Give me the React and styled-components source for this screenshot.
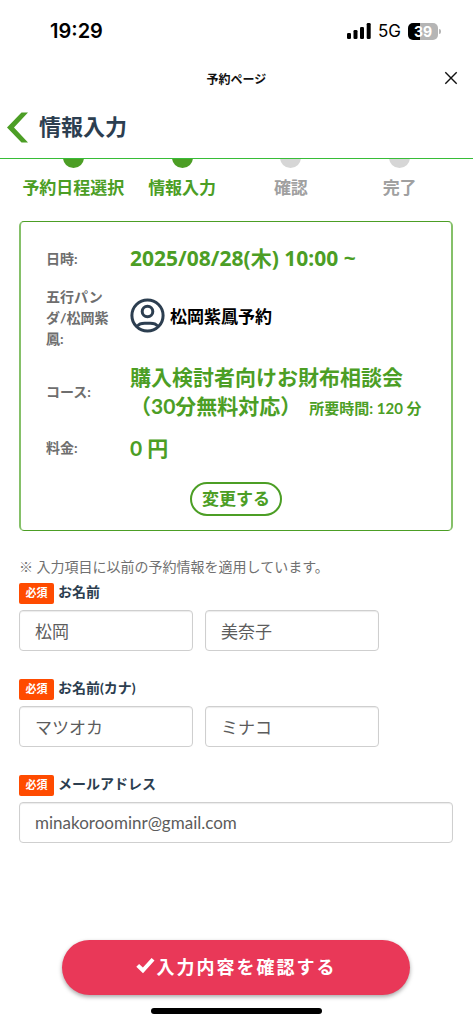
import React from 'react';
import styled, { createGlobalStyle } from 'styled-components';

const green = '#4c9e25';
const navy = '#2c3e50';

const GlobalStyle = createGlobalStyle`
  * { box-sizing: border-box; }
  body { margin: 0; background: #fff; }
  body, button, input {
    font-family: Lato, "Noto Sans CJK JP", sans-serif;
  }
`;

const Page = styled.div`
  min-height: 100vh;
  display: flex;
  flex-direction: column;
  color: ${navy};
`;

const StatusBar = styled.div`
  height: 62px;
  padding: 0 32px 0 50px;
  display: flex;
  align-items: center;
  justify-content: space-between;
  font-family: Inter, sans-serif;
  color: #000;
`;

const Clock = styled.time`
  font-size: 20px;
  font-weight: 600;
`;

const Indicators = styled.div`
  display: flex;
  align-items: center;
  gap: 7px;
  font-size: 17px;
`;

const Battery = styled.div`
  display: flex;
  align-items: center;
  gap: 1px;
`;

const BatteryBody = styled.span`
  width: 30px;
  height: 17px;
  border-radius: 5px;
  background: linear-gradient(to right, #000 40%, #b5b5b5 40%);
  color: #fff;
  font-size: 14px;
  font-weight: 700;
  line-height: 17px;
  text-align: center;
`;

const BatteryCap = styled.span`
  width: 2px;
  height: 5px;
  border-radius: 0 2px 2px 0;
  background: #b5b5b5;
`;

const TitleBar = styled.div`
  height: 32px;
  padding: 0 15px;
  display: grid;
  grid-template-columns: 14px 1fr 14px;
  align-items: center;
  color: #111;
`;

const PageName = styled.span`
  grid-column: 2;
  font-size: 12px;
  font-weight: 700;
  text-align: center;
`;

const IconButton = styled.button`
  border: 0;
  padding: 0;
  background: none;
  display: flex;
  color: inherit;
  cursor: pointer;
`;

const Header = styled.header`
  height: 65px;
  padding: 2px 7px 0;
  display: flex;
  align-items: center;
  gap: 11px;
  border-bottom: 1px solid #37bd37;
`;

const Heading = styled.h1`
  margin: 0;
  font-size: 22px;
  line-height: 32px;
  font-weight: 700;
`;

const Steps = styled.ol`
  list-style: none;
  margin: 0;
  padding: 0 19px;
  display: grid;
  grid-template-columns: repeat(4, 1fr);
`;

const Step = styled.li`
  display: flex;
  flex-direction: column;
  align-items: center;
  gap: 8px;
  font-size: 17px;
  line-height: 24px;
  font-weight: 700;
  white-space: nowrap;
  color: ${(p) => (p.$done ? green : '#a0a0a0')};
`;

const DotWindow = styled.span`
  height: 9px;
  overflow: hidden;
  display: flex;
  align-items: flex-end;
`;

const Dot = styled.span`
  width: 21px;
  height: 21px;
  border-radius: 50%;
  background: ${(p) => (p.$done ? green : '#d6d6d6')};
`;

const Main = styled.main`
  padding: 21px 20px 0 19px;
`;

const Card = styled.section`
  padding: 22px 25px 14px 25px;
  border: 1px solid ${green};
  border-width: 1px 2px;
  border-color: ${green} #85c069;
  border-radius: 5px;
  display: flex;
  flex-direction: column;
`;

const Details = styled.dl`
  margin: 0;
  display: flex;
  flex-direction: column;
  gap: 13px;
`;

const DetailRow = styled.div`
  display: grid;
  grid-template-columns: 68px 1fr;
  column-gap: 16px;
  align-items: center;
`;

const Term = styled.dt`
  font-size: 14px;
  line-height: 21px;
  font-weight: 700;
  color: #6e6e6e;
  word-break: break-all;
`;

const Value = styled.dd`
  margin: 0;
  font-size: 21px;
  line-height: 29px;
  font-weight: 700;
  color: ${green};
`;

const DateText = styled.time`
  display: block;
  font-family: "Noto Sans", "Noto Sans CJK JP", sans-serif;
`;

const Staff = styled.dd`
  margin: 0;
  padding-bottom: 4px;
  display: flex;
  align-items: center;
  gap: 5px;
  font-size: 17px;
  font-weight: 700;
  color: #000;
`;

const Duration = styled.span`
  margin-left: 8px;
  font-size: 15px;
  line-height: 15px;
`;

const ChangeButton = styled.button`
  align-self: center;
  margin-top: 20px;
  height: 34px;
  padding: 0 10px;
  border: 2px solid ${green};
  border-radius: 17px;
  background: #fff;
  color: ${green};
  font-size: 17px;
  line-height: 24px;
  font-weight: 700;
  cursor: pointer;
`;

const Form = styled.form`
  padding-top: 26px;
  display: flex;
  flex-direction: column;
`;

const Note = styled.p`
  margin: 0 0 6px;
  font-size: 14px;
  line-height: 20px;
  color: #707070;
`;

const Field = styled.fieldset`
  min-width: 0;
  margin: 0 0 28px;
  padding: 0;
  border: 0;
`;

const FieldLabel = styled.label`
  height: 27px;
  display: flex;
  align-items: flex-start;
  gap: 4px;
  font-size: 14px;
  line-height: 18px;
  font-weight: 700;
`;

const Badge = styled.span`
  width: 35px;
  height: 21px;
  border-radius: 2px;
  background: #ff4b00;
  color: #fff;
  font-size: 11px;
  line-height: 20px;
  text-align: center;
`;

const Inputs = styled.div`
  display: grid;
  grid-template-columns: ${(p) => (p.$split ? '1fr 1fr' : '1fr')};
  column-gap: 12px;
  width: ${(p) => (p.$split ? '83%' : '100%')};
`;

const TextInput = styled.input`
  width: 100%;
  min-width: 0;
  height: 41px;
  padding: 0 15px;
  border: 1px solid #cfcfcf;
  border-radius: 4px;
  box-shadow: inset 0 1px 1px rgba(0, 0, 0, 0.08);
  background: #fff;
  color: #5c5c5c;
  font-size: 17px;
`;

const SubmitButton = styled.button`
  align-self: center;
  width: 80%;
  height: 55px;
  margin-top: 69px;
  padding: 0 0 4px;
  border: 0;
  border-radius: 28px;
  background: #e93858;
  box-shadow: 0 2px 4px rgba(0, 0, 0, 0.35);
  color: #fff;
  display: flex;
  align-items: center;
  justify-content: center;
  gap: 2px;
  font-size: 18px;
  font-weight: 700;
  letter-spacing: 2px;
  cursor: pointer;
`;

const HomeIndicator = styled.div`
  width: 36%;
  height: 6px;
  margin: 13px auto 10px;
  border-radius: 3px;
  background: #000;
`;

const steps = [
  { name: '予約日程選択', done: true },
  { name: '情報入力', done: true },
  { name: '確認', done: false },
  { name: '完了', done: false },
];

const fields = [
  { label: 'お名前', inputs: [{ id: 'sei', value: '松岡' }, { id: 'mei', value: '美奈子' }] },
  { label: 'お名前(カナ)', inputs: [{ id: 'sei-kana', value: 'マツオカ' }, { id: 'mei-kana', value: 'ミナコ' }] },
  { label: 'メールアドレス', inputs: [{ id: 'email', type: 'email', value: 'minakoroominr@gmail.com' }] },
];

const Signal = () => (
  <svg width="24" height="16" viewBox="0 0 24 16" aria-hidden="true">
    <rect x="0" y="10" width="4" height="6" rx="1.3" />
    <rect x="6.5" y="7" width="4" height="9" rx="1.3" />
    <rect x="13" y="4" width="4" height="12" rx="1.3" />
    <rect x="19.7" y="0" width="4" height="16" rx="1.3" />
  </svg>
);

const CloseIcon = () => (
  <svg width="14" height="14" viewBox="0 0 14 14" fill="none" stroke="currentColor" strokeWidth="1.4" aria-hidden="true">
    <path d="M1.3 1.3l11.4 11.4M12.7 1.3L1.3 12.7" />
  </svg>
);

const BackIcon = () => (
  <svg width="21" height="31" viewBox="0 0 21 31" fill={green} aria-hidden="true">
    <path d="M14.5 0.5H21L7 15.5l14 15h-6.5L0 15.5z" />
  </svg>
);

const PersonIcon = () => (
  <svg width="35" height="35" viewBox="0 0 35 35" fill="none" stroke={navy} strokeWidth="3" aria-hidden="true">
    <circle cx="17.5" cy="17.5" r="15.6" />
    <circle cx="17.5" cy="13.5" r="5.3" />
    <path d="M7.500 28C10 24.500 13 25.300 17.500 25.300S25 24.500 27.500 28" />
  </svg>
);

const CheckIcon = () => (
  <svg width="19" height="17" viewBox="0 0 19 17" fill="#fff" aria-hidden="true">
    <path d="M0.3 9.7L3.1 6.9l3.8 3.7L15.6 1l2.9 2.6L7 16.2z" />
  </svg>
);

export default function App() {
  return (
    <Page>
      <GlobalStyle />
      <StatusBar>
        <Clock>19:29</Clock>
        <Indicators>
          <Signal />
          <span>5G</span>
          <Battery>
            <BatteryBody>39</BatteryBody>
            <BatteryCap />
          </Battery>
        </Indicators>
      </StatusBar>
      <TitleBar>
        <PageName>予約ページ</PageName>
        <IconButton type="button" aria-label="閉じる"><CloseIcon /></IconButton>
      </TitleBar>
      <Header>
        <IconButton type="button" aria-label="戻る"><BackIcon /></IconButton>
        <Heading>情報入力</Heading>
      </Header>
      <Steps>
        {steps.map((s) => (
          <Step key={s.name} $done={s.done}>
            <DotWindow><Dot $done={s.done} /></DotWindow>
            {s.name}
          </Step>
        ))}
      </Steps>
      <Main>
        <Card>
          <Details>
            <DetailRow>
              <Term>日時:</Term>
              <Value><DateText>2025/08/28(木) 10:00 ~</DateText></Value>
            </DetailRow>
            <DetailRow>
              <Term>五行パンダ/松岡紫鳳:</Term>
              <Staff><PersonIcon />松岡紫鳳予約</Staff>
            </DetailRow>
            <DetailRow>
              <Term>コース:</Term>
              <Value>
                購入検討者向けお財布相談会<br />（30分無料対応）
                <Duration>所要時間: 120 分</Duration>
              </Value>
            </DetailRow>
            <DetailRow>
              <Term>料金:</Term>
              <Value>0 円</Value>
            </DetailRow>
          </Details>
          <ChangeButton type="button">変更する</ChangeButton>
        </Card>
        <Form onSubmit={(e) => e.preventDefault()}>
          <Note>※ 入力項目に以前の予約情報を適用しています。</Note>
          {fields.map((f) => (
            <Field key={f.label}>
              <FieldLabel htmlFor={f.inputs[0].id}>
                <Badge>必須</Badge>
                {f.label}
              </FieldLabel>
              <Inputs $split={f.inputs.length > 1}>
                {f.inputs.map((i) => (
                  <TextInput key={i.id} id={i.id} type={i.type || 'text'} defaultValue={i.value} aria-label={f.label} />
                ))}
              </Inputs>
            </Field>
          ))}
          <SubmitButton type="submit"><CheckIcon />入力内容を確認する</SubmitButton>
        </Form>
      </Main>
      <HomeIndicator />
    </Page>
  );
}
